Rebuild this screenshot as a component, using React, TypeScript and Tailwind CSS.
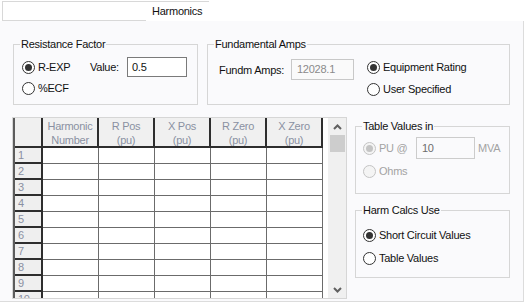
import type { ReactNode } from "react";

const COLS = [
  ["Harmonic", "Number"],
  ["R Pos", "(pu)"],
  ["X Pos", "(pu)"],
  ["R Zero", "(pu)"],
  ["X Zero", "(pu)"],
];

function Radio({ checked, disabled, label }: { checked?: boolean; disabled?: boolean; label: string }) {
  return (
    <div className="flex h-[16px] items-center">
      <span
        className={
          "flex h-[13px] w-[13px] items-center justify-center rounded-full border " +
          (disabled ? "border-[#c4c4c4] bg-[#f4f4f4]" : "border-[#333333] bg-white")
        }
      >
        {checked && <span className={"h-[7px] w-[7px] rounded-full " + (disabled ? "bg-[#c4c4c4]" : "bg-[#333333]")} />}
      </span>
      <span className={"ml-[3px] " + (disabled ? "text-[#a3a3a3]" : "text-[#111]")}>{label}</span>
    </div>
  );
}

function GroupBox({ title, className, children }: { title: string; className: string; children: ReactNode }) {
  return (
    <div className={"relative border border-[#d6d6d6] " + className}>
      <span className="absolute left-[6px] top-[-8px] bg-[#fafafc] px-[1px] leading-[14px] text-[#111]">{title}</span>
      {children}
    </div>
  );
}

function Chevron({ down }: { down?: boolean }) {
  return (
    <svg width="9" height="6" viewBox="0 0 9 6" className={down ? "rotate-180" : ""}>
      <polyline points="1,5 4.5,1.5 8,5" fill="none" stroke="#606060" strokeWidth="2" />
    </svg>
  );
}

export default function App() {
  return (
    <div className="h-[307px] w-[526px] overflow-hidden bg-white font-['Liberation_Sans',Arial,sans-serif] text-[11px] tracking-[-0.25px] text-[#111]">
      {/* tabs */}
      <div className="flex h-[21px] border-[#e0e0e0]">
        <div className="ml-[2px] mt-[1px] h-[20px] w-[144px] border-b border-l border-t border-[#d8d8d8] bg-white" />
        <div className="mt-[1px] h-[20px] w-[63px] border-t border-[#d8d8d8] bg-white pl-[6px] leading-[19px]">
          Harmonics
        </div>
      </div>

      <div className="h-[281px] w-[524px] border-b border-r border-[#dcdcdc] bg-[#fafafc]">
        {/* top groups */}
        <div className="flex gap-[9px] pl-[13px] pt-[23px]">
          <GroupBox title="Resistance Factor" className="h-[61px] w-[185px]">
            <div className="pl-[8px] pt-[12px]">
              <div className="flex h-[20px] items-center">
                <div className="w-[68px]">
                  <Radio checked label="R-EXP" />
                </div>
                <span className="w-[37px]">Value:</span>
                <div className="h-[20px] w-[60px] border border-[#7a7a7a] bg-white pl-[4px] leading-[18px]">0.5</div>
              </div>
              <div className="mt-[1px] flex h-[20px] items-center">
                <Radio label="%ECF" />
              </div>
            </div>
          </GroupBox>

          <GroupBox title="Fundamental Amps" className="h-[61px] w-[303px]">
            <div className="flex items-start pl-[11px] pt-[14px]">
              <span className="flex h-[22px] w-[72px] items-center">Fundm Amps:</span>
              <div className="h-[21px] w-[63px] border border-[#c8c8c8] bg-[#fafafa] pl-[5px] leading-[19px] text-[#8a8a8a]">
                12028.1
              </div>
              <div className="ml-[13px] flex flex-col gap-[6px]">
                <Radio checked label="Equipment Rating" />
                <Radio label="User Specified" />
              </div>
            </div>
          </GroupBox>
        </div>

        {/* grid + right groups */}
        <div className="mt-[12px] flex pl-[12px]">
          <div className="flex h-[182px] w-[335px] border border-[#d6d6d6]">
            <div className="h-full w-[315px] overflow-hidden border-l-2 border-[#5c5c5c] bg-white">
              <div className="flex h-[30px]">
                <div className="w-[28px] border-b-2 border-r-2 border-[#2e2e2e] bg-[#f0f0f0]" />
                {COLS.map((c) => (
                  <div
                    key={c[0]}
                    className="flex w-[56px] flex-col items-center justify-center border-b-2 border-r-2 border-[#2e2e2e] bg-[#f0f0f0] pt-[1px] leading-[14px] text-[#8a90a2]"
                  >
                    <span>{c[0]}</span>
                    <span>{c[1]}</span>
                  </div>
                ))}
              </div>
              {Array.from({ length: 10 }, (_, i) => (
                <div key={i} className="flex h-[16px]">
                  <div className="w-[28px] border-b-2 border-r-2 border-[#2e2e2e] bg-[#efefef] pl-[3px] leading-[14px] text-[#8a90a2]">
                    {i + 1}
                  </div>
                  {COLS.map((c) => (
                    <div key={c[0]} className="w-[56px] border-b border-r border-[#6b6b6b]" />
                  ))}
                </div>
              ))}
            </div>
            <div className="flex h-full w-[18px] flex-col items-center bg-[#f0f0f0]">
              <div className="flex h-[17px] items-center justify-center">
                <Chevron />
              </div>
              <div className="h-[17px] w-[15px] bg-[#cdcdcd]" />
              <div className="flex-1" />
              <div className="flex h-[17px] items-center justify-center">
                <Chevron down />
              </div>
            </div>
          </div>

          <div className="ml-[8px] w-[155px]">
            <GroupBox title="Table Values in" className="mt-[9px] h-[68px]">
              <div className="pl-[7px] pt-[10px]">
                <div className="flex h-[22px] items-center">
                  <div className="w-[53px]">
                    <Radio checked disabled label="PU @" />
                  </div>
                  <div className="h-[22px] w-[59px] border border-[#cccccc] bg-[#fafafc] pl-[5px] leading-[20px] text-[#6d6d6d]">
                    10
                  </div>
                  <span className="ml-[3px] text-[#a3a3a3]">MVA</span>
                </div>
                <div className="mt-[1px] flex h-[22px] items-center">
                  <Radio disabled label="Ohms" />
                </div>
              </div>
            </GroupBox>

            <GroupBox title="Harm Calcs Use" className="mt-[16px] h-[68px]">
              <div className="flex flex-col gap-[7px] pl-[7px] pt-[16px]">
                <Radio checked label="Short Circuit Values" />
                <Radio label="Table Values" />
              </div>
            </GroupBox>
          </div>
        </div>
      </div>
    </div>
  );
}
